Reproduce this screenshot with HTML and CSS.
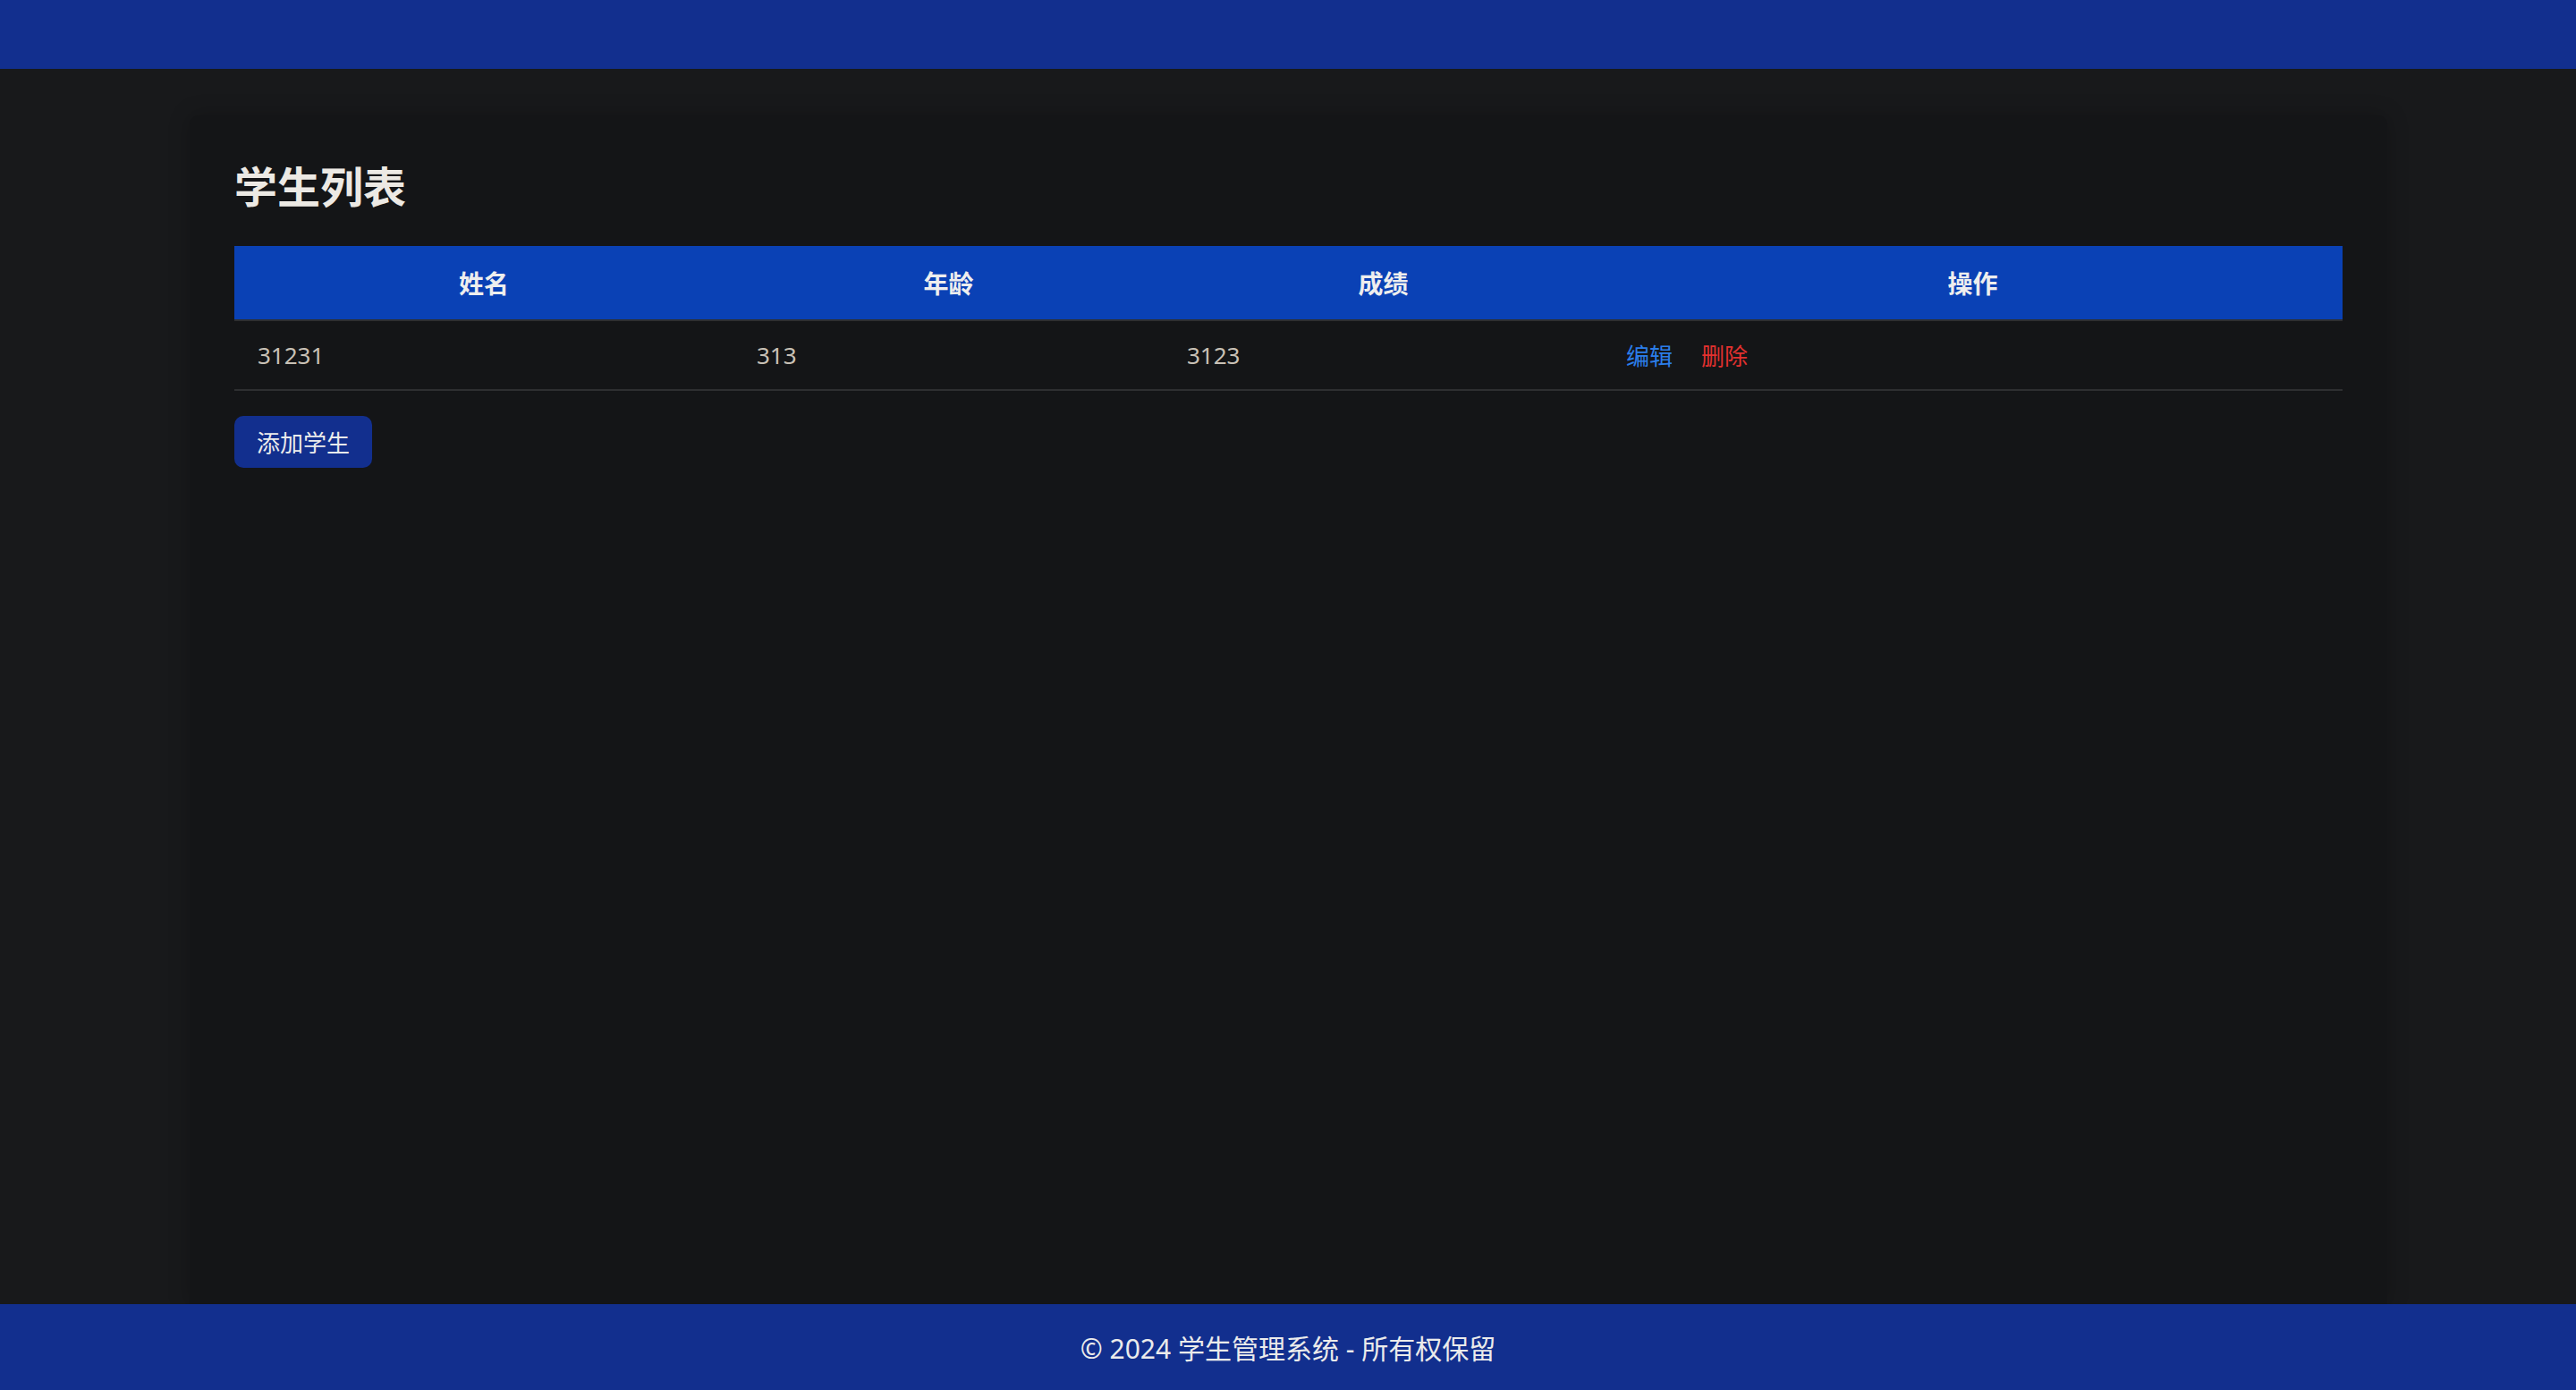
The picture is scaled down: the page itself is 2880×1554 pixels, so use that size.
FILE: index.html
```html
<!DOCTYPE html>
<html lang="zh-CN">
<head>
<meta charset="UTF-8">
<title>学生管理系统</title>
<link rel="stylesheet" href="styles.css">
</head>
<body>
<header class="topbar"></header>
<main class="main">
  <section class="panel">
    <h2 class="title">学生列表</h2>
    <table class="students">
      <colgroup>
        <col class="c-name"><col class="c-age"><col class="c-score"><col class="c-ops">
      </colgroup>
      <thead>
        <tr><th>姓名</th><th>年龄</th><th>成绩</th><th>操作</th></tr>
      </thead>
      <tbody>
        <tr>
          <td>31231</td>
          <td>313</td>
          <td>3123</td>
          <td><a class="act edit">编辑</a><a class="act del">删除</a></td>
        </tr>
      </tbody>
    </table>
    <button class="add-btn">添加学生</button>
  </section>
</main>
<footer class="footer">© 2024 学生管理系统 - 所有权保留</footer>
</body>
</html>
```
FILE: styles.css
```css
* { box-sizing: border-box; }
html, body { height: 100%; }
body {
  margin: 0;
  background: #18191b;
  font-family: "Noto Sans", "Noto Sans CJK SC", sans-serif;
  display: flex;
  flex-direction: column;
  min-height: 100vh;
}
.topbar {
  height: 77px;
  background: #122f8e;
  flex: none;
}
.main {
  flex: 1;
  display: flex;
  padding: 52px 211px 0 212px;
}
.panel {
  flex: 1;
  background: #141517;
  border-radius: 10px 10px 0 0;
  box-shadow: 0 0 24px rgba(0, 0, 0, 0.22);
  padding: 51px 50px 0 50px;
}
.title {
  margin: 0 0 37px;
  font-size: 48px;
  line-height: 58px;
  font-weight: 700;
  color: #ece9e4;
}
.students {
  width: 100%;
  border-collapse: collapse;
  table-layout: fixed;
}
.c-name { width: 558px; }
.c-age { width: 481px; }
.c-score { width: 491px; }
.c-ops { width: auto; }
.students th {
  background: #0a41b5;
  color: #eeeeee;
  font-size: 28px;
  font-weight: 700;
  height: 83px;
  text-align: center;
  padding: 0 26px;
  border-bottom: 2px solid #2e2f31;
}
.students td {
  height: 78px;
  padding: 0 26px;
  font-size: 26px;
  color: #c9c1b6;
  border-bottom: 2px solid #2e2f31;
}
.act {
  cursor: pointer;
}
.edit { color: #2b7de9; margin-right: 32px; }
.del { color: #e3312f; }
.add-btn {
  display: block;
  margin-top: 28px;
  background: #122f8e;
  color: #ececec;
  border: none;
  border-radius: 10px;
  height: 58px;
  padding: 0 25px;
  font-family: "Noto Sans", "Noto Sans CJK SC", sans-serif;
  font-size: 26px;
  cursor: pointer;
}
.footer {
  flex: none;
  height: 96px;
  background: #122f8e;
  color: #ebebeb;
  font-size: 30px;
  display: flex;
  align-items: center;
  justify-content: center;
}
```
